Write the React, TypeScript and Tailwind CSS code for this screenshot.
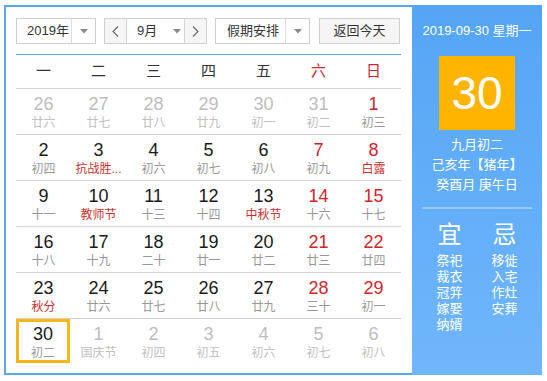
import React from "react";

type Cell = { d: number; l: string; out?: boolean; red?: boolean; fest?: boolean; today?: boolean };

const rows: Cell[][] = [
  [
    { d: 26, l: "廿六", out: true },
    { d: 27, l: "廿七", out: true },
    { d: 28, l: "廿八", out: true },
    { d: 29, l: "廿九", out: true },
    { d: 30, l: "初一", out: true },
    { d: 31, l: "初二", out: true },
    { d: 1, l: "初三", red: true },
  ],
  [
    { d: 2, l: "初四" },
    { d: 3, l: "抗战胜...", fest: true },
    { d: 4, l: "初六" },
    { d: 5, l: "初七" },
    { d: 6, l: "初八" },
    { d: 7, l: "初九", red: true },
    { d: 8, l: "白露", red: true, fest: true },
  ],
  [
    { d: 9, l: "十一" },
    { d: 10, l: "教师节", fest: true },
    { d: 11, l: "十三" },
    { d: 12, l: "十四" },
    { d: 13, l: "中秋节", fest: true },
    { d: 14, l: "十六", red: true },
    { d: 15, l: "十七", red: true },
  ],
  [
    { d: 16, l: "十八" },
    { d: 17, l: "十九" },
    { d: 18, l: "二十" },
    { d: 19, l: "廿一" },
    { d: 20, l: "廿二" },
    { d: 21, l: "廿三", red: true },
    { d: 22, l: "廿四", red: true },
  ],
  [
    { d: 23, l: "秋分", fest: true },
    { d: 24, l: "廿六" },
    { d: 25, l: "廿七" },
    { d: 26, l: "廿八" },
    { d: 27, l: "廿九" },
    { d: 28, l: "三十", red: true },
    { d: 29, l: "初一", red: true },
  ],
  [
    { d: 30, l: "初二", today: true },
    { d: 1, l: "国庆节", out: true },
    { d: 2, l: "初四", out: true },
    { d: 3, l: "初五", out: true },
    { d: 4, l: "初六", out: true },
    { d: 5, l: "初七", out: true },
    { d: 6, l: "初八", out: true },
  ],
];

const Caret = () => (
  <svg width="8" height="5" viewBox="0 0 8 5">
    <path d="M0 0 L8 0 L4 4.5 Z" fill="#8a8a8a" />
  </svg>
);

const Chevron = ({ dir }: { dir: "l" | "r" }) => (
  <svg width="7" height="11" viewBox="0 0 7 11">
    <path
      d={dir === "l" ? "M6 0.5 L1 5.5 L6 10.5" : "M1 0.5 L6 5.5 L1 10.5"}
      stroke="#666"
      strokeWidth="1.1"
      fill="none"
    />
  </svg>
);

function DayCell({ c }: { c: Cell }) {
  const numColor = c.out ? "text-[#bdbdbd]" : c.red ? "text-[#d0262d]" : "text-[#1a1a1a]";
  const lunColor = c.out ? "text-[#c0c0c0]" : c.fest ? "text-[#c8302c]" : "text-[#979797]";
  const inner = (
    <>
      <div className={`text-[18px] leading-[20px] ${numColor}`}>{c.d}</div>
      <div className={`mt-[1px] text-[12px] leading-[16px] whitespace-nowrap ${lunColor}`}>{c.l}</div>
    </>
  );
  if (c.today) {
    return (
      <div className="h-[45px]">
        <div className="w-[54px] h-[44px] border-[3px] border-[#f6b817] pt-[2px] flex flex-col items-center">
          {inner}
        </div>
      </div>
    );
  }
  return <div className="h-[45px] pt-[5px] flex flex-col items-center">{inner}</div>;
}

export default function App() {
  const font = { fontFamily: '"Liberation Sans", Arial, "Noto Sans CJK SC", sans-serif' };
  return (
    <div className="w-[547px] h-[381px] bg-white pl-[4px] pt-[5px]" style={font}>
      <div className="flex w-[538px] h-[370px]">
        <div className="w-[408px] h-full border-2 border-r-0 border-[#5aa6f0] px-[10px] pt-[11px]">
          {/* header controls */}
          <div className="flex h-[26px] text-[13px] text-[#333]">
            <div className="w-[80px] flex border border-[#cfcfcf] bg-white">
              <div className="flex-1 flex items-center pl-[10px]">2019年</div>
              <div className="w-[24px] border-l border-[#dcdcdc] flex items-center justify-center">
                <Caret />
              </div>
            </div>
            <div className="ml-[8px] w-[103px] flex border border-[#cfcfcf] bg-white">
              <div className="w-[22px] bg-[#f5f5f5] border-r border-[#d6d6d6] flex items-center justify-center">
                <Chevron dir="l" />
              </div>
              <div className="flex-1 flex items-center pl-[10px] gap-[16px]">
                <span>9月</span>
                <Caret />
              </div>
              <div className="w-[22px] bg-[#f5f5f5] border-l border-[#d6d6d6] flex items-center justify-center">
                <Chevron dir="r" />
              </div>
            </div>
            <div className="ml-[8px] w-[95px] flex border border-[#cfcfcf] bg-white">
              <div className="flex-1 flex items-center pl-[11px]">假期安排</div>
              <div className="w-[24px] border-l border-[#dcdcdc] flex items-center justify-center">
                <Caret />
              </div>
            </div>
            <div className="ml-[9px] w-[81px] flex items-center justify-center border border-[#cfcfcf] bg-[#f5f5f5]">
              返回今天
            </div>
          </div>

          {/* table */}
          <div className="mt-[10px] border-t border-[#5aa6f0] w-[385px]">
            <div className="grid grid-cols-[repeat(7,55px)] h-[33px] items-center text-[15px] text-[#333]">
              {["一", "二", "三", "四", "五", "六", "日"].map((w, i) => (
                <div key={w} className={`text-center ${i >= 5 ? "text-[#d0262d]" : ""}`}>
                  {w}
                </div>
              ))}
            </div>
            {rows.map((r, ri) => (
              <div key={ri} className="grid grid-cols-[repeat(7,55px)] border-t border-[#d2d2d2]">
                {r.map((c, ci) => (
                  <DayCell key={ci} c={c} />
                ))}
              </div>
            ))}
          </div>
        </div>

        {/* right panel */}
        <div className="w-[130px] h-full bg-gradient-to-b from-[#55a5f5] to-[#70b6fc] px-[10px] pt-[16px] text-white flex flex-col items-center">
          <div className="text-[13px] leading-[20px] whitespace-nowrap">2019-09-30 星期一</div>
          <div className="mt-[15px] w-[76px] h-[74px] bg-[#ffb400] flex items-center justify-center text-[46px] leading-none">
            30
          </div>
          <div className="mt-[5px] text-[13px] leading-[20px] text-center whitespace-nowrap">
            <div>九月初二</div>
            <div>己亥年【猪年】</div>
            <div>癸酉月 庚午日</div>
          </div>
          <div className="mt-[12px] w-[110px] h-[2px] bg-white/35" />
          <div className="mt-[12px] w-[110px] grid grid-cols-2">
            <div className="flex flex-col items-center">
              <div className="text-[24px] leading-[28px]">宜</div>
              <div className="mt-[4px] text-[13px] leading-[16px]">
                <div>祭祀</div>
                <div>裁衣</div>
                <div>冠笄</div>
                <div>嫁娶</div>
                <div>纳婿</div>
              </div>
            </div>
            <div className="flex flex-col items-center">
              <div className="text-[24px] leading-[28px]">忌</div>
              <div className="mt-[4px] text-[13px] leading-[16px]">
                <div>移徙</div>
                <div>入宅</div>
                <div>作灶</div>
                <div>安葬</div>
              </div>
            </div>
          </div>
        </div>
      </div>
    </div>
  );
}
